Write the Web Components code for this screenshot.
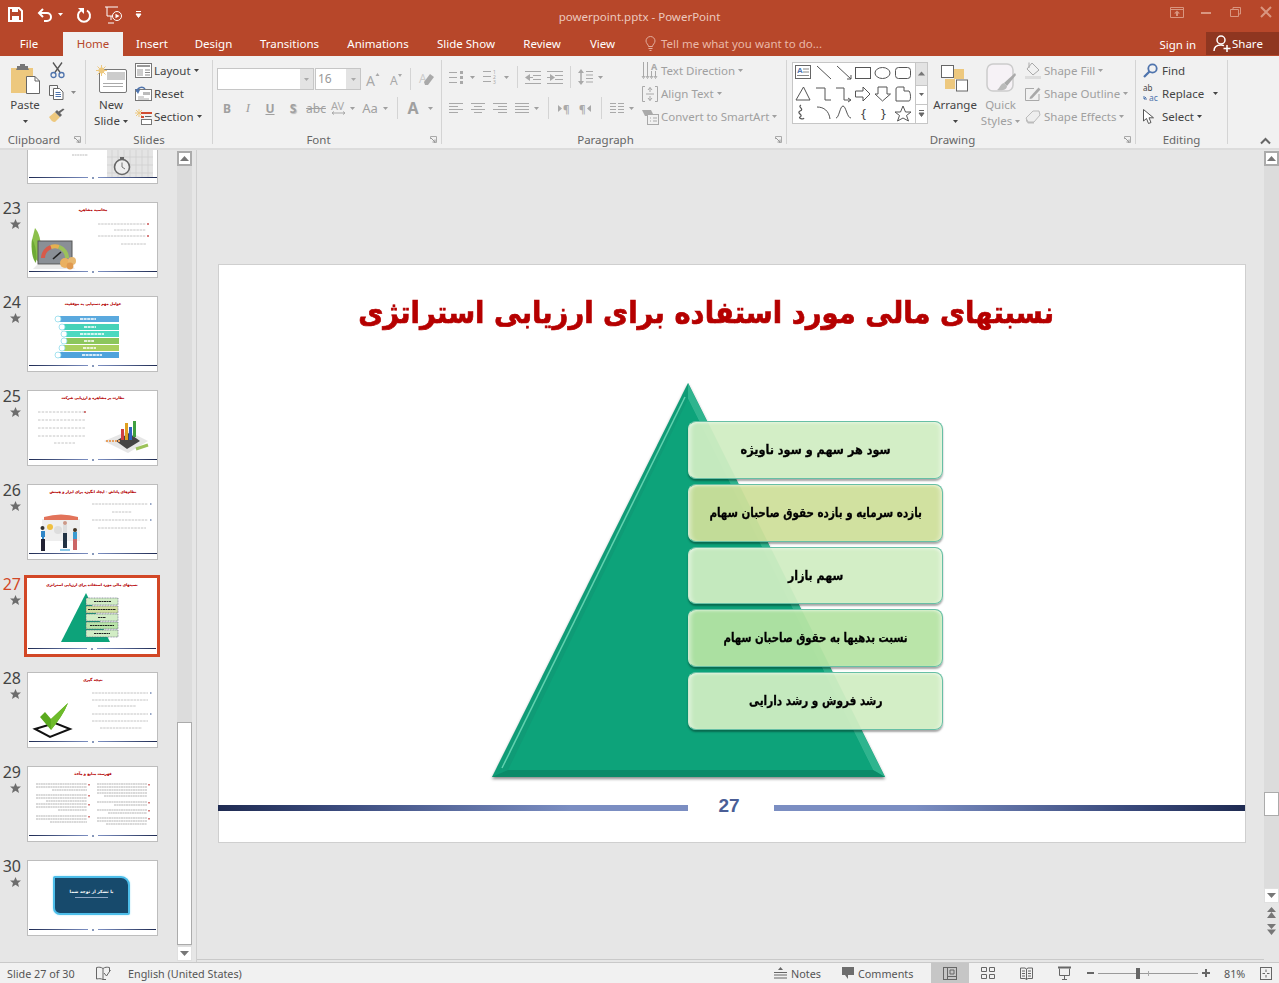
<!DOCTYPE html>
<html lang="en">
<head>
<meta charset="UTF-8">
<title>powerpoint.pptx - PowerPoint</title>
<style>
  html, body { margin: 0; height: 100%; overflow: hidden; background: #e6e6e6; }
  body { font: 12px "Noto Sans", "Open Sans", sans-serif; color: #444; }
  ppt-thumb svg { display: block; }
</style>
</head>
<body>

<ppt-titlebar></ppt-titlebar>
<ppt-tabs></ppt-tabs>

<ppt-ribbon>
  <rb-group label="Clipboard" w="86" launcher>
    <rb-big icon="paste" style="margin-left:6px;width:38px" caret>Paste</rb-big>
    <rb-col style="margin:-2px 0 0 4px">
      <rb-cell w="18"><ppt-icon name="cut"></ppt-icon></rb-cell>
      <rb-cell w="32" style="justify-content:flex-start;padding-left:1px"><ppt-icon name="copy"></ppt-icon><ppt-icon name="caret" style="margin-left:7px"></ppt-icon></rb-cell>
      <rb-cell w="18"><ppt-icon name="painter"></ppt-icon></rb-cell>
    </rb-col>
  </rb-group>

  <rb-group label="Slides" w="127">
    <rb-big icon="newslide" style="margin-left:6px;width:38px" second="Slide">New</rb-big>
    <rb-col style="margin-left:5px">
      <rb-item icon="layout" caret>Layout</rb-item>
      <rb-item icon="reset">Reset</rb-item>
      <rb-item icon="section" caret>Section</rb-item>
    </rb-col>
  </rb-group>

  <rb-group label="Font" w="229" launcher off>
    <rb-col style="margin-left:4px">
      <rb-row h="22" style="margin-top:8px">
        <rb-combo w="97" btn="13"></rb-combo>
        <rb-combo w="46" btn="14" style="margin-left:1px" value="16"></rb-combo>
        <rb-cell w="24"><ppt-icon name="grow"></ppt-icon></rb-cell>
        <rb-cell w="22"><ppt-icon name="shrink"></ppt-icon></rb-cell>
        <rb-cell w="6"><rb-sep></rb-sep></rb-cell>
        <rb-cell w="26"><ppt-icon name="clearfmt"></ppt-icon></rb-cell>
      </rb-row>
      <rb-row h="20" style="margin-top:8px">
        <rb-cell w="20"><b>B</b></rb-cell>
        <rb-cell w="22"><i style="font-family:'Liberation Serif',serif;font-size:13px">I</i></rb-cell>
        <rb-cell w="22"><u><b>U</b></u></rb-cell>
        <rb-cell w="24"><b style="text-shadow:1px 1px 1px #bbb">S</b></rb-cell>
        <rb-cell w="22"><s>abc</s></rb-cell>
        <rb-cell w="22"><ppt-icon name="spacing"></ppt-icon></rb-cell>
        <rb-cell w="6"><ppt-icon name="caret"></ppt-icon></rb-cell>
        <rb-cell w="26" style="margin-left:2px"><span style="font-size:13px">Aa</span></rb-cell>
        <rb-cell w="4"><ppt-icon name="caret"></ppt-icon></rb-cell>
        <rb-cell w="20"><rb-sep></rb-sep></rb-cell>
        <rb-cell w="12"><b style="font-size:16px">A</b></rb-cell>
        <rb-cell w="22"><ppt-icon name="caret"></ppt-icon></rb-cell>
      </rb-row>
    </rb-col>
  </rb-group>

  <rb-group label="Paragraph" w="345" launcher off>
    <rb-col style="margin-left:5px;width:195px">
      <rb-row h="22" style="margin-top:6px">
        <rb-cell w="18"><ppt-icon name="bullets"></ppt-icon></rb-cell>
        <rb-cell w="14"><ppt-icon name="caret"></ppt-icon></rb-cell>
        <rb-cell w="18" style="margin-left:2px"><ppt-icon name="numbering"></ppt-icon></rb-cell>
        <rb-cell w="14"><ppt-icon name="caret"></ppt-icon></rb-cell>
        <rb-cell w="8"><rb-sep></rb-sep></rb-cell>
        <rb-cell w="23"><ppt-icon name="indentless"></ppt-icon></rb-cell>
        <rb-cell w="22"><ppt-icon name="indentmore"></ppt-icon></rb-cell>
        <rb-cell w="8"><rb-sep></rb-sep></rb-cell>
        <rb-cell w="19" style="margin-left:2px"><ppt-icon name="linespacing"></ppt-icon></rb-cell>
        <rb-cell w="10"><ppt-icon name="caret"></ppt-icon></rb-cell>
      </rb-row>
      <rb-row h="20" style="margin-top:10px">
        <rb-cell w="18"><ppt-icon name="alignleft"></ppt-icon></rb-cell>
        <rb-cell w="22" style="margin-left:2px"><ppt-icon name="aligncenter"></ppt-icon></rb-cell>
        <rb-cell w="22"><ppt-icon name="alignright"></ppt-icon></rb-cell>
        <rb-cell w="22"><ppt-icon name="justify"></ppt-icon></rb-cell>
        <rb-cell w="6"><ppt-icon name="caret"></ppt-icon></rb-cell>
        <rb-cell w="18"><rb-sep></rb-sep></rb-cell>
        <rb-cell w="14"><ppt-icon name="ltr"></ppt-icon></rb-cell>
        <rb-cell w="27"><ppt-icon name="rtl"></ppt-icon></rb-cell>
        <rb-cell w="6"><rb-sep></rb-sep></rb-cell>
        <rb-cell w="22" style="margin-left:2px"><ppt-icon name="columns"></ppt-icon></rb-cell>
        <rb-cell w="6"><ppt-icon name="caret"></ppt-icon></rb-cell>
      </rb-row>
    </rb-col>
    <rb-col>
      <rb-item icon="textdir" caret>Text Direction</rb-item>
      <rb-item icon="aligntext" caret>Align Text</rb-item>
      <rb-item icon="smartart" caret>Convert to SmartArt</rb-item>
    </rb-col>
  </rb-group>

  <rb-group label="Drawing" w="349" launcher>
    <shape-gallery style="margin:2px 0 0 5px"></shape-gallery>
    <rb-big icon="arrange" style="margin-left:6px;width:42px" caret>Arrange</rb-big>
    <rb-big icon="quickstyles" style="margin-left:4px;width:41px" second="Styles" off>Quick</rb-big>
    <rb-col style="margin-left:4px" off>
      <rb-item icon="shapefill" caret>Shape Fill</rb-item>
      <rb-item icon="shapeoutline" caret>Shape Outline</rb-item>
      <rb-item icon="shapeeffects" caret>Shape Effects</rb-item>
    </rb-col>
  </rb-group>

  <rb-group label="Editing" w="92">
    <rb-col style="margin-left:7px">
      <rb-item icon="find">Find</rb-item>
      <rb-item icon="replace" caret gap="9">Replace</rb-item>
      <rb-item icon="select" caret>Select</rb-item>
    </rb-col>
  </rb-group>
</ppt-ribbon>

<ppt-workspace>
  <ppt-thumb n="" label="" slot="thumbs" style="margin-top:-42px">
    <svg viewBox="0 0 130 74" width="130" height="74">
      <rect x="79" y="0" width="46" height="68" fill="#e4e4e4"/>
      <path d="M84 0V68M90 0V68M96 0V68M102 0V68M108 0V68M114 0V68M120 0V68M79 8H125M79 16H125M79 24H125M79 32H125M79 40H125M79 48H125M79 56H125M79 64H125" stroke="#cfcfcf" stroke-width=".7"/>
      <circle cx="94" cy="58" r="7.500" fill="#eee" stroke="#666" stroke-width="1.600"/>
      <rect x="92" y="48" width="4" height="2.500" fill="#666"/>
      <path d="M94 58V53.500M94 58L97 60" stroke="#555" stroke-width=".8"/>
      <path d="M44 46H60" stroke="#bbb" stroke-dasharray="2 .6"/>
    </svg>
  </ppt-thumb>

  <ppt-thumb n="23" label="محاسبه مشاهره" slot="thumbs">
    <svg viewBox="0 0 130 74" width="130" height="74">
      <path d="M70 21H118M86 27H118M70 33H118M93 41H118" stroke="#c4c4c4" stroke-width="1" stroke-dasharray="2.500 .7"/>
      <path d="M120 20v2M120 32v2" stroke="#b00000"/>
      <path d="M7 25C13 32 14 44 12 60 5 56 3 46 4 37Z" fill="#8cc04c"/><path d="M4 36C8 42 9 52 8 60 4 56 3 46 4 36Z" fill="#6faa35"/>
      <path d="M9 62H44L47 66H5Z" fill="#e9e9e9"/>
      <rect x="10" y="38" width="34" height="23" fill="#8a8f96" stroke="#555"/>
      <path d="M15 55A12 12 0 0 1 23 44" fill="none" stroke="#d85a4a" stroke-width="4"/>
      <path d="M23 44A12 12 0 0 1 31 44" fill="none" stroke="#e6b050" stroke-width="4"/>
      <path d="M31 44A12 12 0 0 1 39 55" fill="none" stroke="#9cc25a" stroke-width="4"/>
      <path d="M25 56L33 49" stroke="#222" stroke-width="1.600"/>
      <circle cx="37" cy="60" r="5" fill="#eab060"/><circle cx="44" cy="58" r="4" fill="#e8b870"/><circle cx="42" cy="63" r="3.400" fill="#e09a50"/>
    </svg>
  </ppt-thumb>

  <ppt-thumb n="24" label="عوامل مهم دستیابی به موفقیت" slot="thumbs">
    <svg viewBox="0 0 130 74" width="130" height="74">
      <g>
        <rect x="30" y="19" width="61" height="6" fill="#5aa9de"/>
        <rect x="35" y="27" width="56" height="6" fill="#46d2b8"/>
        <rect x="37" y="34" width="54" height="6" fill="#4cd9c0"/>
        <rect x="38" y="41" width="53" height="6" fill="#8cc65c"/>
        <rect x="35" y="48" width="56" height="6" fill="#a9cf5e"/>
        <rect x="30" y="55" width="61" height="6" fill="#4fa3dc"/>
      </g>
      <g fill="#fff" stroke="#8fdcec" stroke-width=".8">
        <circle cx="30" cy="22" r="3"/><circle cx="34" cy="30" r="3"/><circle cx="36" cy="37" r="3"/>
        <circle cx="36" cy="44" r="3"/><circle cx="34" cy="51" r="3"/><circle cx="30" cy="58" r="3"/>
      </g>
      <path d="M52 22H68M56 30H68M52 37H76M56 44H66M55 51H68M54 58H74" stroke="#fff" stroke-width="1.400" stroke-dasharray="3 .6"/>
    </svg>
  </ppt-thumb>

  <ppt-thumb n="25" label="نظارت بر مشاهره و ارزیابی شرکت" slot="thumbs">
    <svg viewBox="0 0 130 74" width="130" height="74">
      <path d="M10 21H57M10 29H57M10 37H57M10 45H57M26 52H47" stroke="#c4c4c4" stroke-dasharray="2.500 1.200"/>
      <path d="M57 20v2" stroke="#b00000"/>
      <path d="M76 50L100 40L120 50L100 62Z" fill="#e6e6e6"/>
      <path d="M88 50L101 42L112 50L99 58Z" fill="#444"/>
      <rect x="93" y="38" width="3" height="11" fill="#d04040"/><rect x="97" y="32" width="3" height="17" fill="#e0a020"/><rect x="101" y="36" width="3" height="13" fill="#3060c0"/><rect x="105" y="30" width="3" height="16" fill="#40a040"/>
      <path d="M78 50H92" stroke="#e8a060" stroke-width="2" stroke-dasharray="2 1"/>
      <path d="M108 58L120 54" stroke="#9cc25a" stroke-width="3"/>
    </svg>
  </ppt-thumb>

  <ppt-thumb n="26" label="نظام‌های پاداش - ایجاد انگیزه برای ابزار و همتش" slot="thumbs">
    <svg viewBox="0 0 130 74" width="130" height="74">
      <path d="M64 19H120M84 27H104M64 35H120M70 43H118" stroke="#c4c4c4" stroke-dasharray="2.500 .8"/>
      <path d="M122 19h1.500M122 35h1.500" stroke="#305090"/>
      <rect x="14" y="34" width="38" height="22" fill="#eee"/>
      <path d="M16 32Q33 27 50 32V35H16Z" fill="#e2735a"/>
      <circle cx="22" cy="42" r="3" fill="#f0c040"/><circle cx="30" cy="45" r="4" fill="#ddd"/>
      <path d="M13 46h4v6h-1v12h-2V52h-1z" fill="#2f86c8"/><circle cx="14.500" cy="43" r="2" fill="#333"/><path d="M13 54h4v12h-4z" fill="#223"/>
      <circle cx="37" cy="38" r="2" fill="#c98"/><path d="M35 40h4v8h-4z" fill="#ddd"/><path d="M35 48h4v15h-4z" fill="#234"/>
      <circle cx="47" cy="45" r="2" fill="#432"/><path d="M45 47h4v7h-4z" fill="#3a9ad0"/><path d="M45 54h4v11h-4z" fill="#c66"/>
      <path d="M32 64h10v2H32z" fill="#8cc8e8"/>
    </svg>
  </ppt-thumb>

  <ppt-thumb n="27" label="نسبتهای مالی مورد استفاده برای ارزیابی استراتژی" slot="thumbs" active>
    <svg viewBox="0 0 130 74" width="130" height="74">
      <path d="M59 15L34 64H83Z" fill="#0da37a"/>
      <g fill="#d2edc5" stroke="#557" stroke-width=".6" stroke-dasharray="1 .6">
        <rect x="59" y="20" width="32" height="7"/>
        <rect x="59" y="28" width="32" height="7" fill="#d1e0a0"/>
        <rect x="59" y="36" width="32" height="7"/>
        <rect x="59" y="44" width="32" height="7" fill="#b8e3a8"/>
        <rect x="59" y="52" width="32" height="7"/>
      </g>
      <path d="M67 23.500H84M61 31.500H89M71 39.500H79M63 47.500H87M67 55.500H83" stroke="#222" stroke-width="1.200" stroke-dasharray="2 .5"/>
    </svg>
  </ppt-thumb>

  <ppt-thumb n="28" label="نتیجه گیری" slot="thumbs">
    <svg viewBox="0 0 130 74" width="130" height="74">
      <path d="M64 20H120M64 27H120M70 33H108M64 41H120M64 48H120M72 55H114" stroke="#c4c4c4" stroke-dasharray="2.500 .7"/>
      <path d="M122 20h1.500M122 41h1.500" stroke="#305090"/>
      <path d="M7 56L27 50L42 56L22 64Z" fill="#fff" stroke="#111" stroke-width="2"/>
      <path d="M12 44L17 39L23 46L40 30C36 40 30 48 23 57Z" fill="#5aaa1e"/>
      <path d="M23 46L40 30C36 40 30 48 23 57Z" fill="#6dbb2a"/>
    </svg>
  </ppt-thumb>

  <ppt-thumb n="29" label="فهرست منابع و مآخذ" slot="thumbs">
    <svg viewBox="0 0 130 74" width="130" height="74">
      <path d="M69 17H119M69 20H119M69 23H119M69 26H119M76 29H119M69 35H119M86 38H119M69 43H119M80 46H119M69 51H119M69 54H119M78 57H119" stroke="#aaa" stroke-width=".9" stroke-dasharray="2 .4"/>
      <path d="M8 17H59M8 20H59M24 23H59M8 28H59M8 31H59M18 34H59M8 37H59M8 40H59M30 43H59M8 49H59M8 52H59M22 55H59" stroke="#aaa" stroke-width=".9" stroke-dasharray="2 .4"/>
      <path d="M121 17v1.500M121 35v1.500M121 43v1.500M121 51v1.500M61 17v1.500M61 28v1.500M61 37v1.500M61 49v1.500" stroke="#b00000"/>
    </svg>
  </ppt-thumb>

  <ppt-thumb n="30" slot="thumbs">
    <thumb-thanks>با تشکر از توجه شما</thumb-thanks>
  </ppt-thumb>

  <ppt-vscroll slot="bar" before="556" size="223" style="margin-top:1px;height:810px"></ppt-vscroll>

  <ppt-slide slot="canvas">
    <pyramid-box tone="a" sx=".867">سود هر سهم و سود ناویژه</pyramid-box>
    <pyramid-box tone="b" sx=".795">بازده سرمایه و بازده حقوق صاحبان سهام</pyramid-box>
    <pyramid-box tone="a" sx=".846" style="height:57px">سهم بازار</pyramid-box>
    <pyramid-box tone="c" sx=".783">نسبت بدهیها به حقوق صاحبان سهام</pyramid-box>
    <pyramid-box tone="a" sx=".806">رشد فروش و رشد دارایی</pyramid-box>
  </ppt-slide>

  <ppt-vscroll slot="side" before="626" size="24" extra style="margin-top:1px;height:811px"></ppt-vscroll>
</ppt-workspace>

<ppt-status></ppt-status>

<script>
  const G = '#a9a9a9', D = '#5a5a5a', Y = '#edc87e', B = '#4f74ad';

  // name: [w, h, inner svg]. Everything is drawn at 1 unit = 1 pixel.
  const ICONS = {
    caret: [5, 3, `<path d="M0 0H5L2.500 3Z" fill="currentColor"/>`],
    save: [15, 15, `<path d="M1 1H11L14 4V14H1Z" fill="none" stroke="#fff" stroke-width="2"/><path d="M4 1H10V5H4ZM4 9H11V14H4Z" fill="#fff"/>`],
    undo: [16, 14, `<path d="M6 1L2 5L6 9" fill="none" stroke="#fff" stroke-width="2"/><path d="M2 5H10A3.800 3.800 0 0 1 10 13H7" fill="none" stroke="#fff" stroke-width="2"/>`],
    repeat: [14, 15, `<path d="M4 3.500A6 6 0 1 0 10 3.500" fill="none" stroke="#fff" stroke-width="2"/><path d="M1 1H7V7Z" fill="#fff"/>`],
    present: [17, 18, `<path d="M0 1H13M2 1V10H8M6 10V14M3 17H9" fill="none" stroke="#fff"/><circle cx="12" cy="10" r="4.500" fill="#b7472a" stroke="#fff"/><path d="M10.500 7.800L14.500 10L10.500 12.200Z" fill="#fff"/>`],
    qat: [5, 7, `<path d="M0 .5H5M0 3H5L2.500 6.500Z" stroke="#fff" fill="#fff"/>`],
    ribbonopt: [14, 11, `<path d="M.5 .5H13.500V10.500H.5ZM.5 2.500H13.500" fill="none" stroke="#d99680"/><path d="M7 3.500L10 6.500H8V9H6V6.500H4Z" fill="#d99680"/>`],
    min: [10, 2, `<rect width="10" height="2" fill="#d99680"/>`],
    restore: [11, 10, `<path d="M3 2.500V.5H10.500V7H8.500M.5 2.500H8.500V9.500H.5Z" fill="none" stroke="#d99680"/>`],
    close: [12, 12, `<path d="M1 1L11 11M11 1L1 11" stroke="#d99680" stroke-width="2"/>`],
    bulb: [11, 15, `<path d="M3.500 10.500C3.500 8.500 1 7.500 1 5A4.500 4.500 0 0 1 10 5C10 7.500 7.500 8.500 7.500 10.500ZM3.500 12.500H7.500M4.500 14.500H6.500" fill="none" stroke="#e3ad9d"/>`],
    share: [19, 17, `<circle cx="8" cy="5" r="4" fill="none" stroke="#fff" stroke-width="1.500"/><path d="M1 16C1 12 4 10 8 10C9 10 10 10.200 11 10.600" fill="none" stroke="#fff" stroke-width="1.500"/><path d="M14 10V17M10.500 13.500H17.500" stroke="#fff" stroke-width="1.500"/>`],
    paste: [29, 30, `<rect x="0" y="4" width="22" height="25" fill="${Y}"/><path d="M6 4V2H9V0H14V2H17V4L18 6H5Z" fill="#777"/><path d="M15.500 12.500H24L28.500 17V29.500H15.500Z" fill="#fff" stroke="#666"/><path d="M24 12.500V17H28.500" fill="none" stroke="#666"/>`],
    cut: [15, 16, `<path d="M3 .5L10.500 11M12 .5L4.500 11" fill="none" stroke="#555" stroke-width="1.300"/><circle cx="3.500" cy="13" r="2.500" fill="none" stroke="${B}" stroke-width="1.300"/><circle cx="11.500" cy="13" r="2.500" fill="none" stroke="${B}" stroke-width="1.300"/>`],
    copy: [15, 15, `<path d="M.5 .5H8.500V3M.5 .5V10.500H4" fill="#fff" stroke="#666"/><path d="M4.500 3.500H10.500L14 7V14.500H4.500Z" fill="#fff" stroke="#666"/><path d="M6.500 7.500H11.500M6.500 9.500H12M6.500 11.500H12" stroke="${B}"/>`],
    painter: [16, 15, `<path d="M0 9L6 4L11 9L6 14C3 14 2 12 0 9Z" fill="${Y}"/><path d="M6 4L11 9L13 7L11 5L15.500 1.500L14 .5L9.500 3.500L8 2Z" fill="#666"/>`],
    newslide: [31, 28, `<rect x="3.500" y="4.500" width="27" height="23" rx="1.500" fill="#fff" stroke="#777"/><rect x="11" y="7" width="18" height="8" fill="#ccc"/><path d="M7 18.500H27M7 21.500H27" stroke="#aaa"/><circle cx="5.500" cy="5.500" r="3" fill="${Y}"/><path d="M5.500 0V11M0 5.500H11M1.500 1.500L9.500 9.500M9.500 1.500L1.500 9.500" stroke="${Y}"/>`],
    layout: [17, 15, `<rect x=".5" y=".5" width="16" height="14" fill="#fff" stroke="#777"/><rect x="2" y="2" width="13" height="2" fill="#999"/><rect x="2" y="6" width="6" height="7" fill="#ccc"/><path d="M10 7H15M10 9.500H15M10 12H15" stroke="#888"/>`],
    reset: [17, 15, `<rect x=".5" y="3.500" width="16" height="11" fill="#fff" stroke="#777"/><rect x="8" y="6" width="7" height="3" fill="#bbb"/><path d="M3 11H9M3 13H14" stroke="#aaa"/><path d="M2 6A4.500 4.500 0 0 1 10 3" fill="none" stroke="${B}" stroke-width="1.500"/><path d="M0 3L3 8L5 4Z" fill="${B}"/>`],
    section: [17, 16, `<path d="M4 0V8M0 4H8M1 1L7 7M7 1L1 7" stroke="${Y}"/><rect x="6" y="3" width="11" height="2" fill="#d04c30"/><path d="M10 7.500H16.500" stroke="#666"/><rect x="6.500" y="10.500" width="10" height="5" fill="#fff" stroke="#777"/><rect x="6" y="7" width="3" height="2" fill="#d04c30"/>`],
    grow: [14, 15, `<text x="0" y="14" font-family="Noto Sans,sans-serif" font-size="14" fill="${G}">A</text><path d="M9.500 4L11.500 1L13.500 4Z" fill="${G}"/>`],
    shrink: [12, 13, `<text x="0" y="12" font-family="Noto Sans,sans-serif" font-size="12" fill="${G}">A</text><path d="M8 1H12L10 4Z" fill="${G}"/>`],
    clearfmt: [15, 15, `<text x="0" y="11" font-family="Noto Sans,sans-serif" font-size="12" fill="#ccc">A</text><path d="M5 10L11 2L15 5L9 13H6Z" fill="${G}"/>`],
    spacing: [15, 14, `<text x="0" y="9" font-family="Noto Sans,sans-serif" font-size="11" fill="${G}">AV</text><path d="M1 12H14M3 10.500L1 12L3 13.500M12 10.500L14 12L12 13.500" fill="none" stroke="${G}"/>`],
    bullets: [14, 13, `<path d="M0 1.500H8M0 6.500H8M0 11.500H8" stroke="${G}"/><path d="M11 0h3v3h-3zM11 5h3v3h-3zM11 10h3v3h-3z" fill="${G}"/>`],
    numbering: [14, 14, `<path d="M0 1.500H8M0 6.500H8M0 11.500H8" stroke="${G}"/><text x="10" y="4" font-size="5" font-family="Noto Sans,sans-serif" fill="${G}">1</text><text x="10" y="9" font-size="5" font-family="Noto Sans,sans-serif" fill="${G}">2</text><text x="10" y="14" font-size="5" font-family="Noto Sans,sans-serif" fill="${G}">3</text>`],
    indentless: [16, 13, `<path d="M0 .5H16M8 4.500H16M8 8.500H16M0 12.500H16" stroke="${G}"/><path d="M0 6.500L5 3V10Z" fill="${G}"/><path d="M4 6.500H8" stroke="${G}"/>`],
    indentmore: [16, 13, `<path d="M0 .5H16M8 4.500H16M8 8.500H16M0 12.500H16" stroke="${G}"/><path d="M8 6.500L3 3V10Z" fill="${G}"/><path d="M0 6.500H4" stroke="${G}"/>`],
    linespacing: [15, 16, `<path d="M8 2.500H15M8 6H15M8 9.500H15M8 13H15" stroke="${G}"/><path d="M3 2V14" stroke="${G}" stroke-width="1.500"/><path d="M0 4L3 0L6 4ZM0 12L3 16L6 12Z" fill="${G}"/>`],
    alignleft: [14, 11, `<path d="M0 .5H14M0 3.500H9M0 6.500H14M0 9.500H9" stroke="${G}"/>`],
    aligncenter: [14, 11, `<path d="M0 .5H14M3 3.500H11M0 6.500H14M3 9.500H11" stroke="${G}"/>`],
    alignright: [14, 11, `<path d="M0 .5H14M5 3.500H14M0 6.500H14M5 9.500H14" stroke="${G}"/>`],
    justify: [14, 11, `<path d="M0 .5H14M0 3.500H14M0 6.500H14M0 9.500H14" stroke="${G}"/>`],
    ltr: [12, 9, `<path d="M0 1L4 4.500L0 8Z" fill="${G}"/><text x="5" y="8.500" font-size="10" font-weight="bold" font-family="Noto Sans,sans-serif" fill="${G}">¶</text>`],
    rtl: [12, 9, `<path d="M12 1L8 4.500L12 8Z" fill="${G}"/><text x="0" y="8.500" font-size="10" font-weight="bold" font-family="Noto Sans,sans-serif" fill="${G}">¶</text>`],
    columns: [14, 11, `<path d="M0 .5H6M0 3.500H6M0 6.500H6M0 9.500H6M8 .5H14M8 3.500H14M8 6.500H14M8 9.500H14" stroke="${G}"/>`],
    textdir: [16, 17, `<text x="9" y="8" font-size="9" font-weight="bold" font-family="Noto Sans,sans-serif" fill="${G}">A</text><path d="M1.500 0V15M5.500 0V15M9.500 9V15M13.500 9V15M0 14L1.500 16.500L3 14M4 14L5.500 16.500L7 14M8 14L9.500 16.500L11 14M12 14L13.500 16.500L15 14" fill="none" stroke="${G}"/>`],
    aligntext: [16, 16, `<path d="M3 .5H.5V15.500H3M13 .5H15.500V15.500H13" fill="none" stroke="${G}"/><path d="M4 8H12" stroke="${G}"/><path d="M8 1.500V6M8 10V14.500M6 4L8 1.500L10 4M6 12L8 14.500L10 12" fill="none" stroke="${G}"/>`],
    smartart: [17, 16, `<path d="M0 1H9L12 7H3Z" fill="${G}"/><rect x="5.500" y="5.500" width="11" height="10" fill="#f1f1f1" stroke="${G}"/><path d="M8 9H9M11 9H15M8 12H9M11 12H15" stroke="${G}"/>`],
    arrange: [28, 27, `<rect x="0.500" y=".5" width="12" height="12" fill="#fff" stroke="#666" stroke-width="1"/><rect x="13" y="4" width="10" height="10" fill="${Y}"/><rect x="4" y="14" width="10" height="10" fill="${Y}"/><rect x="15.500" y="15" width="11" height="11" fill="#fff" stroke="#666"/>`],
    quickstyles: [30, 31, `<rect x="1" y="1" width="26" height="27" rx="6" fill="#f6f2f6" stroke="#ccc" stroke-width="1.500"/><path d="M29 10L18 20L21 23L30 12Z" fill="#aaa"/><path d="M18 20C14 21 14 25 11 27C16 28 21 27 21 23Z" fill="#bbb"/>`],
    shapefill: [16, 17, `<path d="M7 1L14 8L8 13L2 7Z" fill="#f1f1f1" stroke="${G}"/><path d="M4 .5V6" stroke="${G}"/><rect y="14" width="16" height="3" fill="#ddd"/>`],
    shapeoutline: [16, 15, `<path d="M.5 2.500H9M.5 2.500V14.500H14V8" fill="none" stroke="${G}"/><path d="M5 11L13.500 1.500L15.500 3.500L7 12.500L4.500 13Z" fill="${G}"/>`],
    shapeeffects: [16, 14, `<path d="M1 8L8 1H14L15 5L9 12H3Z" fill="#eee" stroke="#bbb"/><path d="M1 8V11L3 13.500H9V12H3Z" fill="#bbb"/>`],
    find: [15, 15, `<circle cx="9.500" cy="5.500" r="4.200" fill="none" stroke="${B}" stroke-width="1.800"/><path d="M6.500 8.500L1 14" stroke="${B}" stroke-width="2.300"/>`],
    replace: [16, 17, `<text x="0" y="6" font-size="8" font-family="Noto Sans,sans-serif" fill="#444">ab</text><text x="6" y="16" font-size="8.500" font-family="Noto Sans,sans-serif" fill="${B}">ac</text><path d="M1 11V14H4M1 14L3 12" fill="none" stroke="${B}"/>`],
    select: [11, 15, `<path d="M.5 .5V12L3.500 9.500L5.500 14.500L8 13.500L6 8.800H10.500Z" fill="#fff" stroke="#555"/>`],
    launcher: [7, 7, `<path d="M.5 3V.5H6.500V6.500H4" fill="none" stroke="#aaa"/><path d="M1 2L5 6M5 3.500V6H2.500" fill="none" stroke="#999"/>`],
    chevron: [11, 6, `<path d="M1 5.500L5.500 1L10 5.500" fill="none" stroke="#666" stroke-width="2"/>`],
    up: [9, 5, `<path d="M0 5L4.500 0L9 5Z" fill="#777"/>`],
    down: [9, 5, `<path d="M0 0L4.500 5L9 0Z" fill="#777"/>`],
    dblup: [9, 11, `<path d="M0 5L4.500 0L9 5ZM0 11L4.500 5L9 11Z" fill="#777"/>`],
    dbldown: [9, 11, `<path d="M0 0L4.500 5L9 0ZM0 5.500L4.500 11L9 5.500Z" fill="#777"/>`],
    star: [11, 10, `<path d="M5.500 0L7 3.500H11L8 6L9 10L5.500 7.800L2 10L3 6L0 3.500H4Z" fill="#6d6d6d"/>`],
    proof: [15, 14, `<path d="M7 2.500C5 1 3 1 .5 1.500V13C3 12.500 5 12.500 7 13.500ZM7 2.500C9 1 11 1 13.500 1.500V5M7 13.500H10" fill="none" stroke="#666"/><path d="M8 7L10.500 10L14.500 4" fill="none" stroke="#666"/>`],
    notes: [13, 12, `<path d="M4 3L6.500 0L9 3Z" fill="#666"/><path d="M0 5.500H13M0 8H13M0 11H13" stroke="#666"/>`],
    comment: [12, 12, `<path d="M0 0H12V8H6V12L3 8H0Z" fill="#6d6d6d"/>`],
    normal: [14, 13, `<rect x=".5" y=".5" width="13" height="12" fill="none" stroke="#666"/><path d="M4.500 .5V12.500M4.500 9.500H13.500M7 3H11V7H7Z" fill="none" stroke="#666"/>`],
    sorter: [14, 12, `<path d="M.5 .5H5.500V4.500H.5ZM8.500 .5H13.500V4.500H8.500ZM.5 7.500H5.500V11.500H.5ZM8.500 7.500H13.500V11.500H8.500Z" fill="none" stroke="#666"/>`],
    reading: [13, 13, `<path d="M6.500 2V12.500M.5 1H5L6.500 2L8 1H12.500V11.500H8L6.500 12.500L5 11.500H.5ZM2 4H5M2 6.500H5M2 9H5M8 4H11M8 6.500H11M8 9H11" fill="none" stroke="#666"/>`],
    slideshow: [13, 13, `<path d="M0 .5H13" stroke="#666" stroke-width="2"/><path d="M1.500 1.500V8.500H11.500V1.500M6.500 8.500V12.500M4 12.500H9" fill="none" stroke="#666"/>`],
    minus: [7, 2, `<rect width="7" height="2" fill="#666"/>`],
    plus: [8, 8, `<path d="M0 3h3V0h2v3h3v2H5v3H3V5H0z" fill="#666"/>`],
    fit: [12, 13, `<rect x=".5" y=".5" width="11" height="12" fill="none" stroke="#666"/><path d="M6 2.500V5M6 8V10.500M2.500 6.500H5M7 6.500H9.500" stroke="#666"/>`],
  };

  // every element renders its shadow root once, when it reaches the page
  const el = (name, render) => customElements.define(name, class extends HTMLElement {
    connectedCallback() {
      if (this.shadowRoot) return;
      this.attachShadow({ mode: 'open' }).innerHTML = render(this);
    }
  });

  el('ppt-icon', h => {
    const [w, ih, inner] = ICONS[h.getAttribute('name')];
    return `<style>:host{display:block;flex:none;width:${w}px;height:${ih}px;line-height:0}svg{display:block;overflow:visible}</style>
      <svg width="${w}" height="${ih}" viewBox="0 0 ${w} ${ih}">${inner}</svg>`;
  });

  el('ppt-titlebar', () => `
    <style>
      :host { display: grid; grid-template-columns: 1fr auto 1fr; align-items: center; height: 32px; background: #b7472a; color: #ecc9bf; font-size: 11.500px; }
      .l, .r { display: flex; align-items: center; }
      .l { padding: 0 0 3px 8px; }
      .r { justify-content: flex-end; padding: 0 7px 8px 0; }
    </style>
    <div class="l">
      <ppt-icon name="save"></ppt-icon>
      <ppt-icon name="undo" style="margin-left:14px"></ppt-icon>
      <ppt-icon name="caret" style="margin-left:5px;color:#fff"></ppt-icon>
      <ppt-icon name="repeat" style="margin-left:14px"></ppt-icon>
      <ppt-icon name="present" style="margin-left:14px"></ppt-icon>
      <ppt-icon name="qat" style="margin-left:14px"></ppt-icon>
    </div>
    <div>powerpoint.pptx - PowerPoint</div>
    <div class="r">
      <ppt-icon name="ribbonopt"></ppt-icon>
      <ppt-icon name="min" style="margin-left:17px;margin-top:2px"></ppt-icon>
      <ppt-icon name="restore" style="margin-left:19px"></ppt-icon>
      <ppt-icon name="close" style="margin-left:19px"></ppt-icon>
    </div>`);

  el('ppt-tabs', () => `
    <style>
      :host { display: flex; height: 24px; background: #b7472a; color: #fff; font-size: 11.500px; }
      .tabs { display: grid; grid-template-columns: 63px 60px 58px 65px 87px 90px 86px 66px 55px; }
      .tabs div { display: flex; align-items: center; justify-content: center; padding-bottom: 1px; box-sizing: border-box; }
      .tabs .file { padding-right: 5px; }
      .tabs .on { background: #f1f1f1; color: #b7472a; }
      .tell { display: flex; align-items: center; gap: 5px; margin-left: 15px; padding-bottom: 1px; color: #eab8a8; }
      .end { margin-left: auto; display: flex; align-items: center; }
      .share { display: flex; align-items: center; width: 73px; height: 23px; margin-left: 10px; padding-left: 7px; box-sizing: border-box; background: #8f3620; align-self: flex-start; }
    </style>
    <div class="tabs">
      <div class="file">File</div><div class="on">Home</div><div>Insert</div><div>Design</div><div>Transitions</div>
      <div>Animations</div><div>Slide Show</div><div>Review</div><div>View</div>
    </div>
    <div class="tell"><ppt-icon name="bulb"></ppt-icon>Tell me what you want to do...</div>
    <div class="end">Sign in<div class="share"><ppt-icon name="share"></ppt-icon>Share</div></div>`);

  el('ppt-ribbon', () => `
    <style>
      :host { display: flex; height: 94px; box-sizing: border-box; padding-top: 4px; background: #f1f1f1; border-bottom: 2px solid #dcdcdc; color: #444; font-size: 11.500px; position: relative; }
      .collapse { position: absolute; right: 8px; bottom: 4px; }
    </style>
    <slot></slot>
    <ppt-icon class="collapse" name="chevron"></ppt-icon>`);

  el('rb-group', h => `
    <style>
      :host { display: block; width: ${h.getAttribute('w')}px; height: 84px; box-sizing: border-box; border-right: 1px solid #d4d4d4; flex: none; }
      .body { display: flex; height: 71px; ${h.hasAttribute('off') ? '--fg:#a0a0a0;' : ''} }
      .label { position: relative; height: 13px; box-sizing: border-box; line-height: 17px; text-align: center; color: #666; ${h.hasAttribute('launcher') ? 'padding-right: 17px;' : ''} }
      ppt-icon { position: absolute; right: 4px; top: 5px; }
    </style>
    <div class="body"><slot></slot></div>
    <div class="label">${h.getAttribute('label')}${h.hasAttribute('launcher') ? '<ppt-icon name="launcher"></ppt-icon>' : ''}</div>`);

  el('rb-col', h => `
    <style>:host { display: flex; flex-direction: column; flex: none; ${h.hasAttribute('off') ? '--fg:#a0a0a0;' : ''} }</style><slot></slot>`);

  el('rb-row', h => `
    <style>:host { display: flex; align-items: center; height: ${h.getAttribute('h')}px; flex: none; }</style><slot></slot>`);

  el('rb-cell', h => `
    <style>
      :host { display: flex; align-items: center; justify-content: center; flex: none; width: ${h.getAttribute('w')}px; min-height: 23px; box-sizing: border-box; color: var(--fg, #8a8a8a); font-size: 12px; }
    </style><slot></slot>`);

  el('rb-sep', () => `<style>:host { display: block; width: 1px; height: 22px; background: #d4d4d4; }</style>`);

  el('rb-item', h => `
    <style>
      :host { display: flex; align-items: center; height: 23px; box-sizing: border-box; padding-bottom: 2px; color: var(--fg, #444); white-space: nowrap; }
      .i { width: 19px; flex: none; }
      .c { margin-left: ${h.getAttribute('gap') || 3}px; }
    </style>
    <div class="i"><ppt-icon name="${h.getAttribute('icon')}"></ppt-icon></div><slot></slot>
    ${h.hasAttribute('caret') ? `<ppt-icon class="c" name="caret"></ppt-icon>` : ''}`);

  el('rb-big', h => {
    const second = h.getAttribute('second');
    return `
    <style>
      :host { display: flex; flex-direction: column; align-items: center; flex: none; color: var(--fg, #444); white-space: nowrap; ${h.hasAttribute('off') ? '--fg:#a0a0a0;' : ''} }
      .i { height: 37px; display: flex; align-items: center; justify-content: center; }
      .t { line-height: 16px; display: flex; align-items: center; gap: 3px; }
      .k { height: 16px; display: flex; align-items: center; }
    </style>
    <div class="i"><ppt-icon name="${h.getAttribute('icon')}"></ppt-icon></div>
    <div class="t"><slot></slot></div>
    ${second ? `<div class="t">${second}<ppt-icon name="caret"></ppt-icon></div>` : `<div class="k"><ppt-icon name="caret"></ppt-icon></div>`}`;
  });

  el('rb-combo', h => `
    <style>
      :host { display: flex; width: ${h.getAttribute('w')}px; height: 22px; box-sizing: border-box; border: 1px solid #c6c6c6; background: #fff; color: #999; font-size: 12px; }
      .v { flex: 1; padding-left: 2px; line-height: 20px; }
      .b { width: ${h.getAttribute('btn')}px; background: #e3e3e3; display: flex; align-items: center; justify-content: center; color: #aaa; }
    </style>
    <div class="v">${h.getAttribute('value') || ''}</div><div class="b"><ppt-icon name="caret"></ppt-icon></div>`);

  el('shape-gallery', () => `
    <style>
      :host { display: flex; flex: none; width: 136px; height: 62px; box-sizing: border-box; border: 1px solid #c6c6c6; background: #fff; }
      .s { display: flex; flex-direction: column; width: 13px; margin-left: auto; border-left: 1px solid #c6c6c6; background: #f4f4f4; }
      .s div { flex: 1; display: flex; align-items: center; justify-content: center; color: #666; }
      .s div + div { border-top: 1px solid #c6c6c6; background: #fff; }
      .s .u { background: #e3e3e3; flex: 1.200; }
      svg { display: block; flex: none; }
    </style>
    <svg width="122" height="60" viewBox="0 0 122 60" fill="none" stroke="#555">
      <rect x="2.500" y="2.500" width="15" height="13" stroke="#666"/><text x="4" y="10" font-size="8" font-weight="bold" font-family="Liberation Sans,sans-serif" fill="#4f74ad" stroke="none">A</text><path d="M10 6H16M10 9H16M4 12.500H16" stroke="#888"/>
      <path d="M24 3L38 16M44 3L58 16M58 16V12M58 16H54"/>
      <rect x="62.500" y="4.500" width="15" height="11"/><ellipse cx="89.500" cy="10" rx="7.500" ry="5.500"/><rect x="102.500" y="4.500" width="15" height="11" rx="3"/>
      <path d="M3 37L10.500 24L17 37Z"/><path d="M23 25H32V37H38M43 25H51V37H57M55 35L58 37L55 39"/>
      <path d="M62.500 28H70V24L77 31L70 38V34H62.500Z"/><path d="M85 24H94V31H97.500L89.500 38L82 31H85Z"/><path d="M103 26C103 24 105 24 106 24H111V28H116C118 30 118 38 116 38H103Z"/>
      <path d="M8 42C4 44 12 46 7 48C3 50 11 52 7 54C5 55 10 57 11 55" stroke-width="1.200"/><path d="M24 44C31 44 36 48 37 56"/><path d="M43 55C46 55 47 43 50 43C53 43 54 55 58 55"/>
      <text x="68" y="55" font-size="13" font-family="Noto Sans,sans-serif" fill="#444" stroke="none">{</text><text x="88" y="55" font-size="13" font-family="Noto Sans,sans-serif" fill="#444" stroke="none">}</text>
      <path d="M110 43L112.500 49H118L113.500 52.500L115.500 58L110 55L104.500 58L106.500 52.500L102 49H107.500Z"/>
    </svg>
    <div class="s"><div class="u"><ppt-icon name="up" style="transform:scale(.8)"></ppt-icon></div><div><ppt-icon name="caret"></ppt-icon></div><div><ppt-icon name="qat" style="filter:brightness(.4)"></ppt-icon></div></div>`);

  el('ppt-workspace', () => `
    <style>
      :host { display: flex; height: 812px; background: #e6e6e6; }
      .pane { width: 177px; height: 812px; overflow: hidden; flex: none; }
      .bar { width: 15px; flex: none; }
      .canvas { flex: 1; margin-left: 4px; border-left: 1px solid #cfcfcf; height: 812px; box-sizing: border-box; }
      .canvas .in { height: 810px; box-sizing: border-box; padding: 114px 0 0 21px; border-bottom: 1px solid #c9c9c9; }
      .side { width: 15px; flex: none; }
    </style>
    <div class="pane"><slot name="thumbs"></slot></div>
    <div class="bar"><slot name="bar"></slot></div>
    <div class="canvas"><div class="in"><slot name="canvas"></slot></div></div>
    <div class="side"><slot name="side"></slot></div>`);

  el('ppt-thumb', h => {
    const active = h.hasAttribute('active');
    const label = h.getAttribute('label');
    return `
    <style>
      :host { display: flex; height: 94px; font-family: "DejaVu Sans", sans-serif; }
      .num { width: 27px; flex: none; display: flex; flex-direction: column; align-items: flex-end; padding-right: 6px; box-sizing: border-box; font: 16px/16px "Noto Sans", sans-serif; color: ${active ? '#d24726' : '#444'}; }
      .num span { height: 16px; margin-top: -2px; }
      .num ppt-icon { margin-top: 3px; }
      .mini { display: grid; grid-template: 1fr / 1fr; width: 131px; height: 76px; box-sizing: border-box; background: #fff; ${active ? 'outline: 3px solid #d24726; width: 130px;' : 'border: 1px solid #bdbdbd;'} overflow: hidden; }
      .mini > *, ::slotted(*) { grid-area: 1 / 1; }
      .title { direction: rtl; text-align: center; font-size: 3.600px; font-weight: bold; line-height: 8px; height: 8px; padding-top: 3px; color: #b50000; -webkit-text-stroke: .12px #b50000; white-space: nowrap; }
      .foot { align-self: end; display: flex; height: 1px; margin: 0 1px 5px; gap: 10px; }
      .foot i { flex: 1; background: linear-gradient(90deg, #1f2b52, #7c8fc2); }
      .foot i + i { background: linear-gradient(90deg, #7c8fc2, #1f2b52); }
      .dot { align-self: end; justify-self: center; width: 2px; height: 2px; margin-bottom: 4px; background: #8899bb; }
    </style>
    <div class="num">${h.getAttribute('n') ? `<span>${h.getAttribute('n')}</span><ppt-icon name="star"></ppt-icon>` : ''}</div>
    <div class="mini">
      <slot></slot>
      ${label ? `<div class="title">${label}</div>` : ''}
      <div class="foot"><i></i><i></i></div><div class="dot"></div>
    </div>`;
  });

  el('thumb-thanks', h => `
    <style>
      :host { display: flex; flex-direction: column; align-items: center; align-self: start; justify-self: start; width: 77px; height: 39px; margin: 15px 0 0 25px; box-sizing: border-box; padding-top: 10px; background: #174a6c; border: 2px solid #4dbeea; border-radius: 2px 9px 2px 7px; box-shadow: 0 0 2px #a8e4f8; color: #fff; font: bold 4.400px/7px "DejaVu Sans", sans-serif; direction: rtl; white-space: nowrap; }
      i { display: block; width: 33px; height: 1px; margin-top: 2px; background: #8fa7c4; }
    </style><slot></slot><i></i>`);

  el('ppt-vscroll', h => {
    const extra = h.hasAttribute('extra');
    return `
    <style>
      :host { display: flex; flex-direction: column; width: 15px; box-sizing: border-box; background: #e6e6e6; }
      .btn { height: 15px; flex: none; box-sizing: border-box; background: #fff; border: 1px solid #ababab; display: flex; align-items: center; justify-content: center; }
      .btn.dn { border-color: #e0e0e0; }
      .up { border-width: 2px; }
      .track { background: #dcdcdc; flex: none; }
      .thumb { height: ${h.getAttribute('size')}px; flex: none; box-sizing: border-box; background: #fff; border: 1px solid #ababab; }
      .rest { flex: 1; background: #dcdcdc; }
      .nav { display: flex; flex-direction: column; align-items: center; gap: 6px; padding-top: 4px; height: 59px; box-sizing: border-box; flex: none; }
    </style>
    <div class="btn up"><ppt-icon name="up"></ppt-icon></div>
    <div class="track" style="height:${h.getAttribute('before')}px"></div>
    <div class="thumb"></div>
    <div class="rest"></div>
    <div class="btn dn"><ppt-icon name="down"></ppt-icon></div>
    ${extra ? `<div class="nav"><ppt-icon name="dblup"></ppt-icon><ppt-icon name="dbldown"></ppt-icon></div>` : ''}`;
  });

  el('ppt-slide', () => `
    <style>
      :host { display: flex; flex-direction: column; width: 1028px; height: 579px; box-sizing: border-box; background: #fff; border: 1px solid #cfcfcf; }
      h1 { margin: 0; height: 115px; box-sizing: border-box; padding: 25px 52px 0 0; direction: rtl; text-align: center; font: bold 30px/46px "DejaVu Sans", sans-serif; color: #b50000; white-space: nowrap; -webkit-text-stroke: .7px #b50000; }
      h1 span { display: inline-block; transform: scaleX(.913); }
      .stage { display: grid; height: 420px; flex: none; }
      .stage > * { grid-area: 1 / 1; }
      svg { display: block; margin-left: 269px; filter: drop-shadow(0 2px 1.500px rgba(0,0,0,.45)); align-self: start; }
      .boxes { z-index: 1; display: flex; flex-direction: column; gap: 5px; width: 255px; margin: 41px 0 0 469px; }
      .foot { display: flex; align-items: center; height: 14px; margin: 1px 0 0 -1px; }
      .foot i { display: block; flex: none; height: 6px; }
      .foot .a { width: 470px; background: linear-gradient(90deg, #1f2b52 0%, #3a4a7c 25%, #7b8ec2 75%, #7b8ec2 100%); }
      .foot .b { flex: 1; background: linear-gradient(90deg, #7b8ec2 0%, #7b8ec2 30%, #3a4a7c 75%, #1f2b52 100%); }
      .foot b { flex: none; width: 86px; box-sizing: border-box; padding: 0 4px 4px 0; text-align: center; font: bold 19px/14px "Liberation Sans", sans-serif; color: #4a5e96; }
    </style>
    <h1><span>نسبتهای مالی مورد استفاده برای ارزیابی استراتژی</span></h1>
    <div class="stage">
      <svg width="402" height="402" viewBox="0 0 402 402">
        <path d="M200 3L4 397H397Z" fill="#0f9b76"/>
        <path d="M200 3L397 397L385 390L200 19Z" fill="#2fb48e"/>
        <path d="M4 397H397L385 390H20Z" fill="#0b8a68"/>
        <path d="M200 19L20 390H385Z" fill="#0da37a"/>
        <path d="M197 17L14 388" stroke="#62d2b0" stroke-width="1.500" fill="none"/>
      </svg>
      <div class="boxes"><slot></slot></div>
    </div>
    <div class="foot"><i class="a"></i><b>27</b><i class="b"></i></div>`);

  const TONES = { a: '208,237,194', b: '206,223,154', c: '182,227,164' };
  el('pyramid-box', h => `
    <style>
      :host { display: flex; align-items: center; justify-content: center; height: 58px; box-sizing: border-box; direction: rtl;
        background: rgba(${TONES[h.getAttribute('tone')]},.94); border: 1px solid #67bfa5; border-left-color: #cfe8cf; border-radius: 8px;
        box-shadow: 0 2px 2px rgba(0,0,0,.35), inset 5px 0 4px -3px rgba(255,255,255,.45), inset -5px 0 4px -3px rgba(255,255,255,.45), inset 0 3px 3px -2px rgba(255,255,255,.5);
        font: bold 13px/20px "DejaVu Sans", sans-serif; color: #000; -webkit-text-stroke: .3px #000; white-space: nowrap; }
      span { display: inline-block; transform: scaleX(${h.getAttribute('sx')}); }
    </style><span><slot></slot></span>`);

  el('ppt-status', () => `
    <style>
      :host { display: flex; align-items: center; height: 21px; box-sizing: border-box; background: #f1f1f1; border-top: 1px solid #c9c9c9; color: #555; font-size: 10.800px; white-space: nowrap; }
      .sl { margin-left: 7px; width: 89px; }
      .lang { margin-left: 17px; }
      .end { margin-left: auto; display: flex; align-items: center; height: 20px; }
      .view { width: 38px; height: 20px; display: flex; align-items: center; justify-content: center; }
      .view.on { background: #c6c6c6; }
      .zoom { display: block; position: relative; width: 100px; height: 1px; margin: 0 4px; background: #9a9a9a; }
      .zoom b { position: absolute; left: 38px; top: -5px; width: 4px; height: 11px; background: #666; }
      .zoom i { position: absolute; left: 50px; top: -2px; width: 1px; height: 5px; background: #aaa; }
    </style>
    <div class="sl">Slide 27 of 30</div>
    <ppt-icon name="proof"></ppt-icon>
    <div class="lang">English (United States)</div>
    <div class="end">
      <ppt-icon name="notes"></ppt-icon><span style="margin-left:4px;width:51px">Notes</span>
      <ppt-icon name="comment"></ppt-icon><span style="margin-left:4px;width:73px">Comments</span>
      <div class="view on"><ppt-icon name="normal"></ppt-icon></div>
      <div class="view"><ppt-icon name="sorter"></ppt-icon></div>
      <div class="view"><ppt-icon name="reading"></ppt-icon></div>
      <div class="view"><ppt-icon name="slideshow"></ppt-icon></div>
      <ppt-icon name="minus" style="margin-left:4px"></ppt-icon>
      <div class="zoom"><b></b><i></i></div>
      <ppt-icon name="plus"></ppt-icon>
      <span style="margin-left:14px;width:36px">81%</span>
      <ppt-icon name="fit" style="margin-right:7px"></ppt-icon>
    </div>`);
</script>

</body>
</html>
